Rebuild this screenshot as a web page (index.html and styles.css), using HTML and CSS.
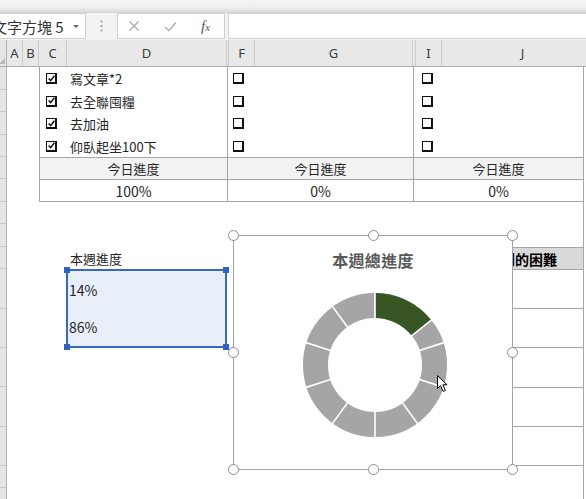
FILE: index.html
```html
<!DOCTYPE html>
<html lang="zh-Hant">
<head>
<meta charset="utf-8">
<title>本週進度</title>
<link rel="stylesheet" href="styles.css">
</head>
<body>
<div class="ribbon-edge"></div>
<div class="fbar">
  <div class="namebox"><span class="name">文字方塊 5</span><span class="dd"></span></div>
  <div class="grip"><svg width="3" height="12" viewBox="0 0 3 12"><rect x="0.5" y="0.5" width="2" height="2"/><rect x="0.5" y="5" width="2" height="2"/><rect x="0.5" y="9.5" width="2" height="2"/></svg></div>
  <div class="fbtns">
    <svg class="ico ico-x" width="12" height="12" viewBox="0 0 12 12"><path d="M1.5 1.5L10.5 10.5M10.5 1.5L1.5 10.5"/></svg>
    <svg class="ico ico-ok" width="13" height="11" viewBox="0 0 13 11"><path d="M1 6L4.8 9.6L12 1.5"/></svg>
    <span class="fx">f<span class="fxx">x</span></span>
  </div>
  <div class="finput"></div>
</div>
<div class="colhdr">
  <div class="ch corner"><span class="tri"></span></div>
  <div class="ch">A</div>
  <div class="ch">B</div>
  <div class="ch">C</div>
  <div class="ch">D</div>
  <div class="ch"></div>
  <div class="ch">F</div>
  <div class="ch">G</div>
  <div class="ch"></div>
  <div class="ch">I</div>
  <div class="ch">J</div>
</div>
<div class="body">
  <div class="rowhdrs">
    <div></div><div></div><div></div><div></div><div></div><div></div><div></div><div></div>
    <div></div><div></div><div></div><div></div><div></div><div></div><div></div><div></div>
  </div>
  <div class="cells">
    <div class="t1">
      <div class="sec s1">
        <div class="cbrow"><span class="cb"><svg width="7" height="7" viewBox="0 0 7 7"><path d="M0.6 3.4L2.7 5.6L6.4 0.8"/></svg></span><span class="task">寫文章*2</span></div>
        <div class="cbrow"><span class="cb"><svg width="7" height="7" viewBox="0 0 7 7"><path d="M0.6 3.4L2.7 5.6L6.4 0.8"/></svg></span><span class="task">去全聯囤糧</span></div>
        <div class="cbrow"><span class="cb"><svg width="7" height="7" viewBox="0 0 7 7"><path d="M0.6 3.4L2.7 5.6L6.4 0.8"/></svg></span><span class="task">去加油</span></div>
        <div class="cbrow"><span class="cb"><svg width="7" height="7" viewBox="0 0 7 7"><path d="M0.6 3.4L2.7 5.6L6.4 0.8"/></svg></span><span class="task">仰臥起坐100下</span></div>
        <div class="today">今日進度</div>
        <div class="pct">100%</div>
      </div>
      <div class="sec s2">
        <div class="cbrow"><span class="cb"></span></div>
        <div class="cbrow"><span class="cb"></span></div>
        <div class="cbrow"><span class="cb"></span></div>
        <div class="cbrow"><span class="cb"></span></div>
        <div class="today">今日進度</div>
        <div class="pct">0%</div>
      </div>
      <div class="sec s3">
        <div class="cbrow"><span class="cb"></span></div>
        <div class="cbrow"><span class="cb"></span></div>
        <div class="cbrow"><span class="cb"></span></div>
        <div class="cbrow"><span class="cb"></span></div>
        <div class="today">今日進度</div>
        <div class="pct">0%</div>
      </div>
    </div>
    <div class="lbl">本週進度</div>
    <div class="t2">
      <div class="t2h"><span>遇到的困難</span></div>
      <div class="t2r"></div>
      <div class="t2r"></div>
      <div class="t2r"></div>
      <div class="t2r"></div>
      <div class="t2r"></div>
    </div>
    <div class="kline"></div>

    <div class="textbox">
      <div class="tbline">14%</div>
      <div class="tbline">86%</div>
      <span class="sq sq-tl"></span><span class="sq sq-tr"></span><span class="sq sq-bl"></span><span class="sq sq-br"></span>
    </div>

    <div class="chart">
      <div class="ctitle">本週總進度</div>
      <svg class="donut" width="150" height="150" viewBox="0 0 150 150">
        <circle cx="75" cy="75" r="59.5" fill="none" stroke="#a5a5a5" stroke-width="25"/>
        <g stroke="#fff" stroke-width="1.6">
          <line x1="75" y1="1" x2="75" y2="29" transform="rotate(0 75 75)"/>
          <line x1="75" y1="1" x2="75" y2="29" transform="rotate(36 75 75)"/>
          <line x1="75" y1="1" x2="75" y2="29" transform="rotate(72 75 75)"/>
          <line x1="75" y1="1" x2="75" y2="29" transform="rotate(108 75 75)"/>
          <line x1="75" y1="1" x2="75" y2="29" transform="rotate(144 75 75)"/>
          <line x1="75" y1="1" x2="75" y2="29" transform="rotate(180 75 75)"/>
          <line x1="75" y1="1" x2="75" y2="29" transform="rotate(216 75 75)"/>
          <line x1="75" y1="1" x2="75" y2="29" transform="rotate(252 75 75)"/>
          <line x1="75" y1="1" x2="75" y2="29" transform="rotate(288 75 75)"/>
          <line x1="75" y1="1" x2="75" y2="29" transform="rotate(324 75 75)"/>
        </g>
        <circle cx="75" cy="75" r="59.5" fill="none" stroke="#375623" stroke-width="25" stroke-dasharray="53.41 400" transform="rotate(-90 75 75)"/>
        <g stroke="#fff" stroke-width="1.6">
          <line x1="75" y1="1" x2="75" y2="29" transform="rotate(0 75 75)"/>
          <line x1="75" y1="1" x2="75" y2="29" transform="rotate(51.43 75 75)"/>
        </g>
      </svg>
      <span class="hd hd-tl"></span><span class="hd hd-tm"></span><span class="hd hd-tr"></span>
      <span class="hd hd-ml"></span><span class="hd hd-mr"></span>
      <span class="hd hd-bl"></span><span class="hd hd-bm"></span><span class="hd hd-br"></span>
    </div>

    <svg class="cursor" width="12" height="18" viewBox="0 0 12 18"><path d="M0.5 0.5L0.5 13.5L3.6 10.6L6.2 16.4L8.4 15.4L5.9 9.8L10 9.8Z"/></svg>
  </div>
</div>
</body>
</html>
```

FILE: styles.css
```css
* { box-sizing: border-box; margin: 0; padding: 0; }
html, body { width: 586px; height: 499px; overflow: hidden; background: #fff; }
body {
  font-family: "Noto Sans CJK TC", "Noto Sans", sans-serif;
  font-size: 13px;
  color: #262626;
}

/* top edge of ribbon */
.ribbon-edge {
  height: 13px;
  background: linear-gradient(#f4f4f4 0, #f1f1f1 7px, #e0e0e0 11px, #d3d3d3 13px);
}

/* formula bar */
.fbar {
  height: 27px;
  background: #f3f3f3;
  display: flex;
  align-items: flex-start;
}
.namebox {
  width: 86px;
  height: 26px;
  background: #fff;
  border: 1px solid #d0d0d0;
  border-left: none;
  display: flex;
  align-items: center;
  overflow: hidden;
}
.name {
  font-size: 15px;
  white-space: nowrap;
  margin-left: -8px;
  color: #333;
}
.dd {
  margin-left: auto;
  margin-right: 6px;
  width: 0;
  height: 0;
  border-left: 3px solid transparent;
  border-right: 3px solid transparent;
  border-top: 3px solid #666;
}
.grip {
  width: 31px;
  height: 26px;
  display: flex;
  align-items: center;
  justify-content: center;
}
.grip svg { fill: #a8a8a8; }
.fbtns {
  width: 108px;
  height: 26px;
  background: #fff;
  border: 1px solid #d0d0d0;
  display: flex;
  align-items: center;
  padding-left: 10px;
}
.ico { fill: none; stroke: #a9a9a9; stroke-width: 1.3; }
.ico-x { margin-right: 24px; }
.ico-ok { margin-right: 24px; }
.fx {
  font-family: "Liberation Serif", "DejaVu Serif", serif;
  font-style: italic;
  font-size: 15px;
  color: #555;
  line-height: 1;
}
.fxx { font-size: 11px; }
.finput {
  flex: 1;
  margin-left: 3px;
  height: 26px;
  background: #fff;
  border: 1px solid #d0d0d0;
  border-right: none;
}

/* column headers */
.colhdr {
  height: 27px;
  width: 586px;
  overflow: hidden;
  display: grid;
  grid-template-columns: 7px 16px 16px 28px 160px 2px 26px 158px 3px 26px 162px;
  background: #e8e8e8;
  border-bottom: 1px solid #adadad;
}
.ch {
  border-right: 1px solid #cbcbcb;
  font-family: "Noto Sans", "Open Sans", sans-serif;
  font-size: 13px;
  color: #3a3a3a;
  display: flex;
  align-items: center;
  justify-content: center;
}
.corner {
  position: relative;
  border-right: 1px solid #b5b5b5;
  background: #e6e6e6;
}
.tri {
  position: absolute;
  right: 1px;
  bottom: 2px;
  width: 0;
  height: 0;
  border-left: 6px solid transparent;
  border-bottom: 6px solid #b9b9b9;
}

/* body */
.body {
  height: 432px;
  overflow: hidden;
  display: flex;
}
.rowhdrs {
  width: 7px;
  flex: none;
  display: grid;
  grid-template-rows: 23px 22px 23px 22px 22px 23px 22px 23px 22px 40px 39px 39px 40px 39px 22px 22px;
  background: #e6e6e6;
  border-right: 1px solid #b5b5b5;
}
.rowhdrs div { border-bottom: 1px solid #c8c8c8; }

.cells {
  position: relative;
  flex: 1;
  display: grid;
  grid-template-columns: 16px 16px 28px 160px 2px 26px 158px 3px 26px 141px 1fr;
  grid-template-rows: 23px 22px 23px 22px 22px 23px 22px 23px 22px 40px 39px 39px 40px 39px 22px 22px;
  background: #fff;
}

/* checklist table */
.t1 {
  grid-column: 3 / 11;
  grid-row: 1 / 7;
  display: grid;
  grid-template-columns: 188px 186px 1fr;
}
.sec {
  display: grid;
  grid-template-rows: 23px 22px 23px 22px 22px 23px;
  border-left: 1px solid #a6a6a6;
}
.cbrow { display: flex; align-items: center; }
.s1 .cbrow { padding-left: 6px; }
.s2 .cbrow { padding-left: 5px; }
.s3 .cbrow { padding-left: 8px; }
.cb {
  width: 11px;
  height: 11px;
  flex: none;
  border: 1px solid #111;
  border-right-width: 2px;
  border-bottom-width: 2px;
  background: #fff;
  display: flex;
  align-items: center;
  justify-content: center;
}
.cb svg { fill: none; stroke: #111; stroke-width: 1.5; }
.task { margin-left: 13px; white-space: nowrap; }
.today {
  background: #f2f2f2;
  border-top: 1px solid #a6a6a6;
  display: flex;
  align-items: center;
  justify-content: center;
}
.pct {
  border-top: 1px solid #a6a6a6;
  border-bottom: 1px solid #a6a6a6;
  display: flex;
  align-items: center;
  justify-content: center;
  font-size: 14px;
}

.lbl {
  grid-column: 4;
  grid-row: 9;
  padding-left: 3px;
  display: flex;
  align-items: center;
  white-space: nowrap;
}

/* right table */
.t2 {
  grid-column: 10;
  grid-row: 9 / 15;
  display: grid;
  grid-template-rows: 23px 39px 39px 40px 39px 39px;
}
.t2h {
  background: #d9d9d9;
  border-top: 1px solid #a6a6a6;
  border-bottom: 1px solid #a6a6a6;
  display: flex;
  align-items: center;
  justify-content: flex-end;
  padding-right: 26px;
  font-weight: 700;
  font-size: 14px;
  color: #000;
  white-space: nowrap;
}
.t2r { border-bottom: 1px solid #a6a6a6; }
.kline {
  grid-column: 11;
  grid-row: 1 / -1;
  border-left: 1px solid #a6a6a6;
}

/* floating text box (selected) */
.textbox {
  position: absolute;
  left: 59px;
  top: 202px;
  width: 161px;
  height: 79px;
  background: #e9eff8;
  border: 2px solid #3569c4;
  display: grid;
  grid-template-rows: 37px 38px;
  font-size: 14px;
}
.tbline { display: flex; align-items: center; padding-left: 1px; }
.sq {
  position: absolute;
  width: 6px;
  height: 6px;
  background: #2f63c0;
}
.sq-tl { left: -4px; top: -4px; }
.sq-tr { right: -4px; top: -4px; }
.sq-bl { left: -4px; bottom: -4px; }
.sq-br { right: -4px; bottom: -4px; }

/* chart */
.chart {
  position: absolute;
  left: 226px;
  top: 168px;
  width: 280px;
  height: 235px;
  background: #fff;
  border: 1px solid #a3a3a3;
  display: flex;
  flex-direction: column;
  align-items: center;
}
.ctitle {
  padding-top: 13px;
  line-height: 22px;
  font-size: 16px;
  font-weight: 700;
  letter-spacing: 0.3px;
  color: #595959;
}
.donut { margin-top: 19px; margin-left: 3px; display: block; }
.hd {
  position: absolute;
  width: 11px;
  height: 11px;
  border-radius: 50%;
  background: #fff;
  border: 1.5px solid #8e8e8e;
}
.hd-tl { left: -6px; top: -6px; }
.hd-tm { left: calc(50% - 5.5px); top: -6px; }
.hd-tr { right: -6px; top: -6px; }
.hd-ml { left: -6px; top: calc(50% - 5.5px); }
.hd-mr { right: -6px; top: calc(50% - 5.5px); }
.hd-bl { left: -6px; bottom: -6px; }
.hd-bm { left: calc(50% - 5.5px); bottom: -6px; }
.hd-br { right: -6px; bottom: -6px; }

.cursor {
  position: absolute;
  left: 430px;
  top: 308px;
  fill: #fff;
  stroke: #000;
  stroke-width: 1;
}
```
